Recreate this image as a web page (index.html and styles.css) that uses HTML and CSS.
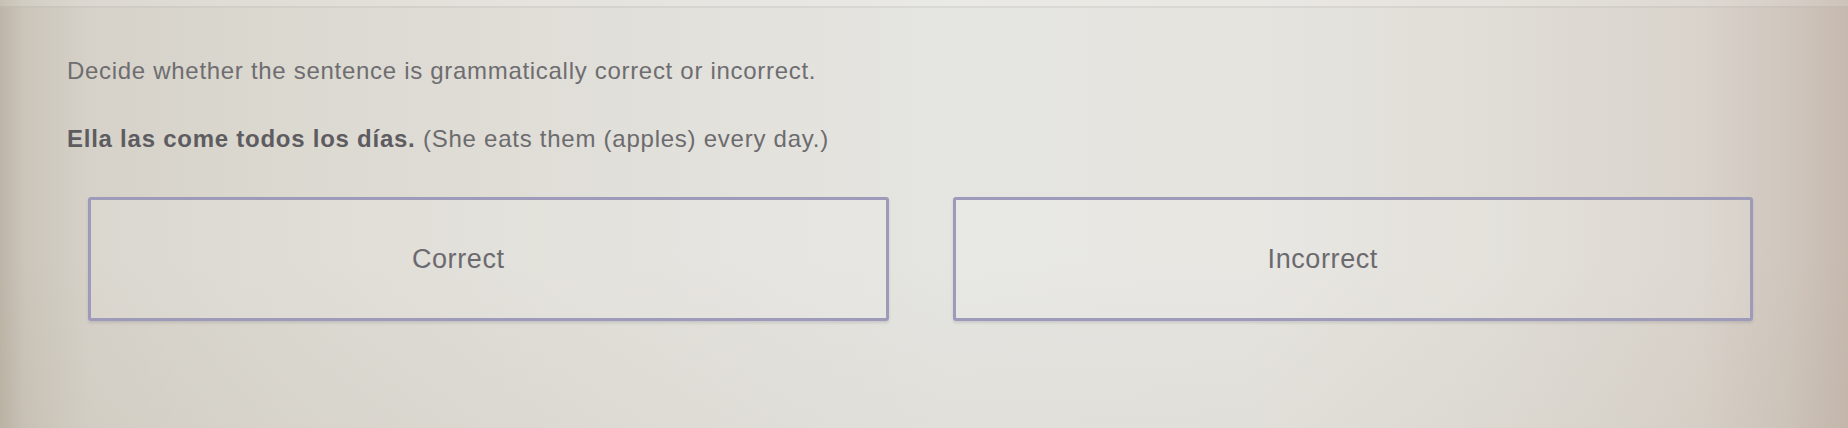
FILE: index.html
```
<!DOCTYPE html>
<html lang="en">
<head>
<meta charset="utf-8">
<title>Grammar question</title>
<link rel="stylesheet" href="styles.css">
</head>
<body>
<div class="screen">
  <div class="topedge"></div>
  <main class="question">
    <p class="prompt">Decide whether the sentence is grammatically correct or incorrect.</p>
    <p class="sentence"><strong>Ella las come todos los días.</strong> (She eats them (apples) every day.)</p>
    <div class="options">
      <button class="option" type="button">Correct</button>
      <button class="option" type="button">Incorrect</button>
    </div>
  </main>
</div>
</body>
</html>
```
FILE: styles.css
```
html, body {
  margin: 0;
  padding: 0;
  height: 100%;
}

body {
  font-family: "Liberation Sans", Arial, sans-serif;
  overflow: hidden;
}

.screen {
  height: 428px;
  background:
    linear-gradient(180deg, rgba(0,0,0,0) 0%, rgba(0,0,0,0) 60%, rgba(120,100,70,0.04) 100%),
    linear-gradient(90deg,
      #bdb5a7 0px,
      #cbc5ba 25px,
      #d6d2c9 90px,
      #dcd9d1 300px,
      #e1dfd9 600px,
      #e5e5e1 950px,
      #e5e4df 1250px,
      #e0ddd6 1500px,
      #d9d3cb 1700px,
      #cfc6bd 1790px,
      #c6b9ae 1848px);
}

.topedge {
  height: 6px;
  border-bottom: 2px solid rgba(150, 145, 135, 0.18);
  background: rgba(255, 255, 255, 0.15);
}

.question {
  padding: 49px 95px 0 67px;
}

.prompt {
  margin: 0;
  font-size: 24px;
  line-height: 28px;
  letter-spacing: 0.7px;
  color: #6e6d70;
}

.sentence {
  margin: 40px 0 0 0;
  font-size: 24px;
  line-height: 28px;
  letter-spacing: 0.75px;
  color: #6c6b6e;
}

.sentence strong {
  font-weight: bold;
  color: #5d5c60;
}

.options {
  display: flex;
  gap: 64px;
  margin-top: 44px;
  padding-left: 21px;
}

.option {
  flex: 1;
  height: 124px;
  margin: 0;
  padding: 0 60px 0 0;
  border: 3px solid #9d9aba;
  border-radius: 3px;
  background: rgba(255, 255, 255, 0.12);
  box-shadow: 0 2px 3px rgba(60, 60, 80, 0.15);
  font-family: "Liberation Sans", Arial, sans-serif;
  font-size: 27px;
  letter-spacing: 0.6px;
  color: #6b6a6e;
  text-align: center;
  cursor: pointer;
}
```
